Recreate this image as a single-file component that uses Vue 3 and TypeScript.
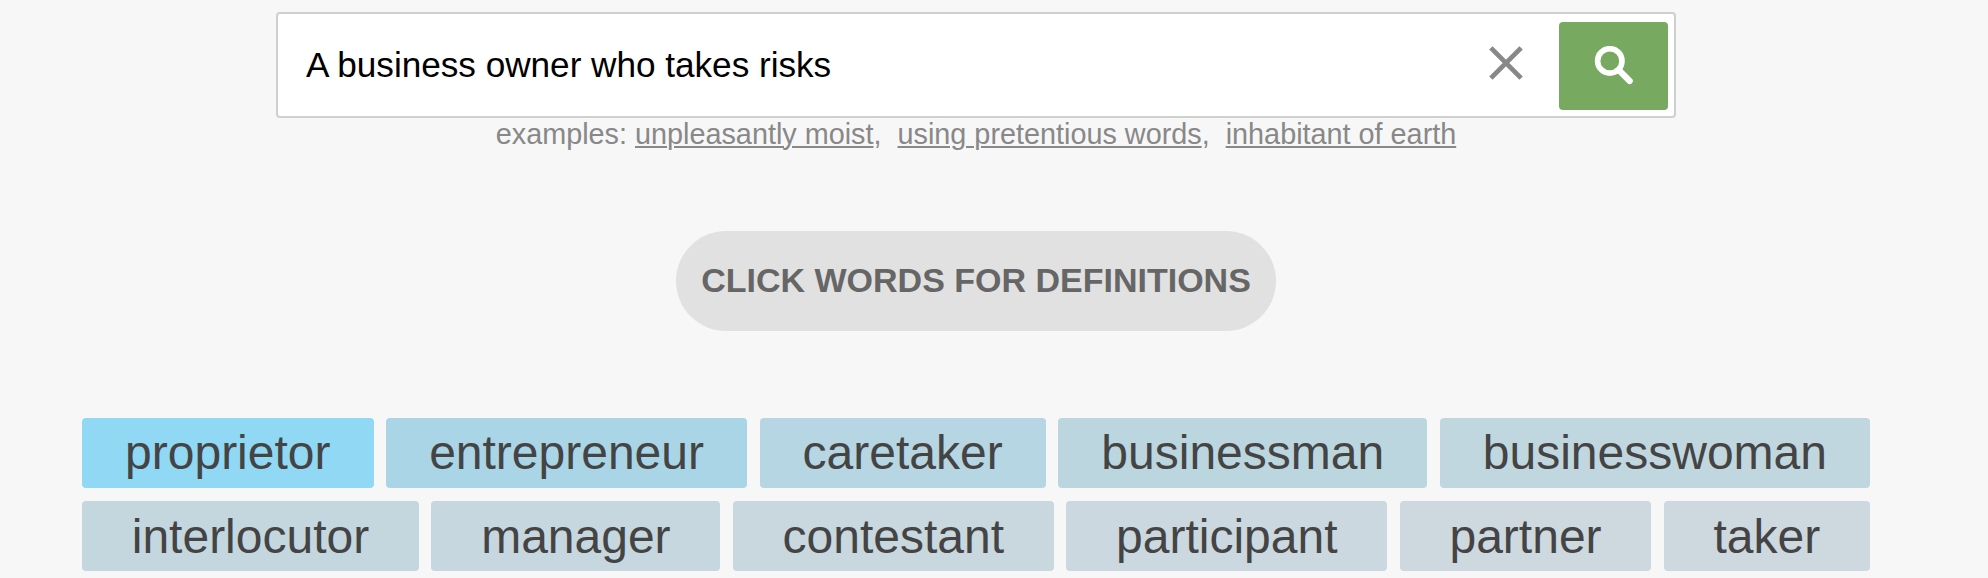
<script setup lang="ts">
import { ref } from 'vue'

interface Word {
  text: string
  color: string
}

const query = ref('A business owner who takes risks')
const examples: string[] = ['unpleasantly moist', 'using pretentious words', 'inhabitant of earth']

const rows: Word[][] = [
  [
    { text: 'proprietor', color: '#90d8f4' },
    { text: 'entrepreneur', color: '#a9d5e6' },
    { text: 'caretaker', color: '#b5d6e2' },
    { text: 'businessman', color: '#bcd6df' },
    { text: 'businesswoman', color: '#c1d7df' },
  ],
  [
    { text: 'interlocutor', color: '#c4d7df' },
    { text: 'manager', color: '#c7d7df' },
    { text: 'contestant', color: '#c9d7de' },
    { text: 'participant', color: '#cbd8df' },
    { text: 'partner', color: '#cdd8df' },
    { text: 'taker', color: '#ced8df' },
  ],
]
</script>

<template>
  <main class="page">
    <form class="search" @submit.prevent>
      <input v-model="query" class="query" type="text" spellcheck="false" />
      <button class="clear" type="button" aria-label="Clear" @click="query = ''">
        <svg width="36" height="36" viewBox="0 0 36 36">
          <path d="M2.9 2.9 33.1 33.1M33.1 2.9 2.9 33.1" stroke="#888" stroke-width="4.8" />
        </svg>
      </button>
      <button class="go" type="submit" aria-label="Search">
        <svg width="40" height="40" viewBox="0 0 40 40" fill="none" stroke="#fff">
          <circle cx="15.8" cy="14.9" r="12.2" stroke-width="5.6" />
          <path d="M25 24.2 35.7 35" stroke-width="6.2" stroke-linecap="round" />
        </svg>
      </button>
    </form>

    <p class="examples">
      <span>examples:&nbsp;</span>
      <span v-for="(example, i) in examples" :key="example"><a>{{ example }}</a><template v-if="i < examples.length - 1">,&nbsp;&nbsp;</template></span>
    </p>

    <div class="hint">CLICK WORDS FOR DEFINITIONS</div>

    <section class="words">
      <div v-for="(row, i) in rows" :key="i" class="row">
        <span v-for="word in row" :key="word.text" class="word" :style="{ backgroundColor: word.color }">{{ word.text }}</span>
      </div>
    </section>
  </main>
</template>

<style>
body {
  background: #f7f7f7;
}
</style>

<style scoped>
.page {
  box-sizing: border-box;
  width: 1952px;
  height: 578px;
  padding-top: 12px;
  overflow: hidden;
  display: flex;
  flex-direction: column;
  align-items: center;
  font-family: "Liberation Sans", Arial, sans-serif;
}

.search {
  box-sizing: border-box;
  width: 1400px;
  height: 106px;
  padding: 0 6px 0 28px;
  display: flex;
  align-items: center;
  background: #fff;
  border: 2px solid #cfcfcf;
  border-radius: 4px;
}

.query {
  flex: 1;
  min-width: 0;
  height: 60px;
  padding: 0;
  border: 0;
  outline: 0;
  background: transparent;
  color: #000;
  font-family: inherit;
  font-size: 35.2px;
  letter-spacing: -0.03px;
}

.clear,
.go {
  display: flex;
  align-items: center;
  justify-content: center;
  padding: 0;
  border: 0;
}

.clear {
  width: 36px;
  height: 36px;
  margin: 0 35px 4px 0;
  background: transparent;
}

.go {
  width: 109px;
  height: 88px;
  margin-top: 2px;
  border-radius: 4px;
  background: #77a961;
}

.examples {
  display: flex;
  margin: 0;
  height: 32px;
  line-height: 32px;
  white-space: nowrap;
  font-size: 28.8px;
  color: #888;
}

.examples a {
  text-decoration: underline;
  text-decoration-thickness: 2px;
  text-underline-offset: 2px;
}

.hint {
  width: 600px;
  height: 100px;
  margin-top: 81px;
  border-radius: 50px;
  background: #e1e1e1;
  color: #666;
  font-size: 34px;
  font-weight: bold;
  line-height: 98px;
  text-align: center;
  white-space: nowrap;
}

.words {
  width: 1788px;
  margin-top: 87px;
  display: flex;
  flex-direction: column;
  gap: 13px;
}

.row {
  display: flex;
  gap: 12.5px;
}

.word {
  flex: 1 1 auto;
  height: 70px;
  border-radius: 4px;
  color: #444;
  font-size: 48px;
  line-height: 69px;
  text-align: center;
}

.row + .row .word {
  line-height: 71px;
}
</style>
